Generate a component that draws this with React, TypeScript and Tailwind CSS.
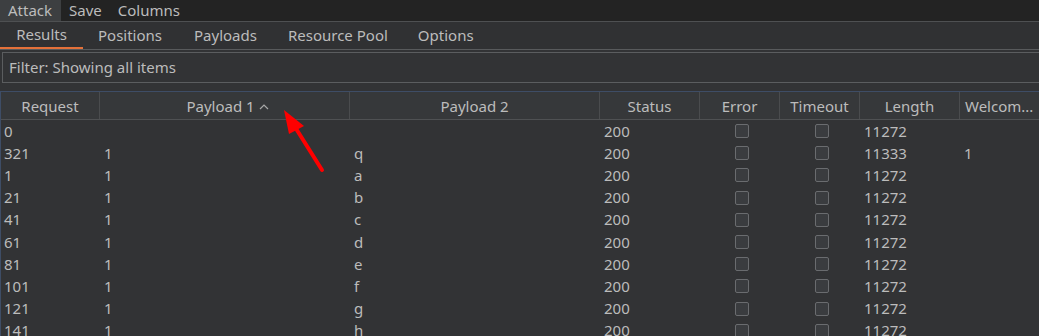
import React from "react";

const cols = [
  { name: "Request", w: 100 },
  { name: "Payload 1", w: 250, sort: true },
  { name: "Payload 2", w: 250 },
  { name: "Status", w: 100 },
  { name: "Error", w: 80 },
  { name: "Timeout", w: 80 },
  { name: "Length", w: 100 },
  { name: "Welcom...", w: 79 },
];

const rows: [string, string, string, string, string, string][] = [
  ["0", "", "", "200", "11272", ""],
  ["321", "1", "q", "200", "11333", "1"],
  ["1", "1", "a", "200", "11272", ""],
  ["21", "1", "b", "200", "11272", ""],
  ["41", "1", "c", "200", "11272", ""],
  ["61", "1", "d", "200", "11272", ""],
  ["81", "1", "e", "200", "11272", ""],
  ["101", "1", "f", "200", "11272", ""],
  ["121", "1", "g", "200", "11272", ""],
  ["141", "1", "h", "200", "11272", ""],
];

function Check() {
  return <div className="w-[14px] h-[14px] rounded-[2px] border border-[#6a6c6f] bg-[#3a3c3f]" />;
}

export default function App() {
  return (
    <div
      className="relative w-[1039px] h-[336px] overflow-hidden bg-[#323335] text-[#bcbcbc] text-[15px]"
      style={{ fontFamily: '"Noto Sans", "Open Sans", sans-serif' }}
    >
      {/* menu bar */}
      <div className="flex h-[21px] bg-[#232323] items-center leading-none">
        <div className="h-full w-[61px] bg-[#3d3f41] flex items-center pl-[8px]">Attack</div>
        <div className="pl-[8px]">Save</div>
        <div className="pl-[16px]">Columns</div>
      </div>
      {/* tabs */}
      <div className="h-[28px] border-t border-[#4e5052] bg-[#303133] flex items-end leading-none relative">
        <div className="w-[83px] h-full flex items-center justify-center border-b-2 border-[#e4713a] pb-[1px]">Results</div>
        <div className="h-full flex items-center pl-[15px]">Positions</div>
        <div className="h-full flex items-center pl-[32px]">Payloads</div>
        <div className="h-full flex items-center pl-[31px]">Resource Pool</div>
        <div className="h-full flex items-center pl-[30px]">Options</div>
      </div>
      <div className="h-[1px] bg-[#585a5c]" />
      {/* filter */}
      <div className="pt-[2px] pl-[2px]">
        <div className="h-[31px] border border-[#5b5d5f] border-r-0 flex items-center pl-[6px] leading-none">
          Filter: Showing all items
        </div>
      </div>
      {/* table */}
      <div className="mt-[8px] border-t border-l border-[#3e4d66]">
        <div className="flex h-[28px] bg-[#36383a] border-b border-[#4f5153] leading-none">
          {cols.map((c, i) => (
            <div
              key={c.name}
              style={{ width: c.w - (i === 0 ? 1 : 0) }}
              className={`flex items-center justify-center shrink-0 pt-[1px] ${i < cols.length - 1 ? "border-r border-[#4a4c4e]" : ""} ${c.name === "Welcom..." ? "justify-start pl-[5px]" : ""} ${c.sort ? "pl-[6px]" : ""}`}
            >
              {c.name}
              {c.sort && (
                <svg width="10" height="8" viewBox="0 0 10 8" className="ml-[4px] mt-[1px]">
                  <path d="M1 6 L5 2 L9 6" fill="none" stroke="#a8a8a8" strokeWidth="1.2" />
                </svg>
              )}
            </div>
          ))}
        </div>
        <div>
          {rows.map((r, ri) => (
            <div key={ri} className="flex h-[22.2px] items-center leading-none">
              <div className="w-[99px] shrink-0 pl-[3px]">{r[0]}</div>
              <div className="w-[250px] shrink-0 pl-[4px]">{r[1]}</div>
              <div className="w-[250px] shrink-0 pl-[4px]">{r[2]}</div>
              <div className="w-[100px] shrink-0 pl-[4px]">{r[3]}</div>
              <div className="w-[80px] shrink-0 flex justify-center pl-[4px]"><Check /></div>
              <div className="w-[80px] shrink-0 flex justify-center pl-[4px]"><Check /></div>
              <div className="w-[100px] shrink-0 pl-[4px]">{r[4]}</div>
              <div className="w-[79px] shrink-0 pl-[4px]">{r[5]}</div>
            </div>
          ))}
        </div>
      </div>
      {/* red arrow annotation */}
      <svg className="absolute left-0 top-0 pointer-events-none" width="1039" height="336">
        <line x1="322" y1="170" x2="295" y2="127" stroke="#ff0000" strokeWidth="4" strokeLinecap="round" />
        <polygon points="284,110 304,126 289,134" fill="#ff0000" />
      </svg>
    </div>
  );
}
